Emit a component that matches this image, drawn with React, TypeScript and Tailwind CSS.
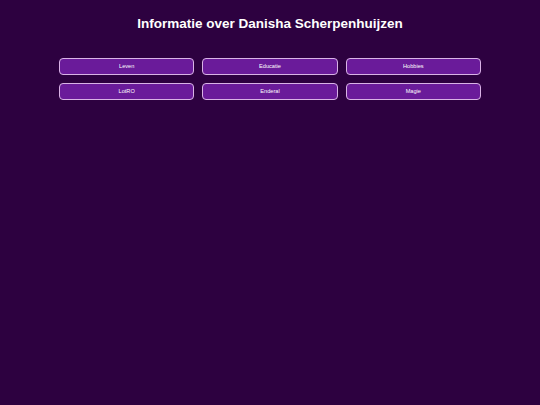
import React from "react";

const items = ["Leven", "Educatie", "Hobbies", "LotRO", "Enderal", "Magie"];

export default function App() {
  return (
    <div
      className="min-h-[405px] w-full bg-[#2d0140] text-white"
      style={{ fontFamily: '"Liberation Sans", Arial, sans-serif' }}
    >
      <h1 className="pt-[15px] text-center text-[13.5px] font-bold leading-[18px]">
        Informatie over Danisha Scherpenhuijzen
      </h1>
      <div className="mx-auto mt-[25px] grid w-[422px] grid-cols-3 gap-x-[8px] gap-y-[8px]">
        {items.map((t) => (
          <button
            key={t}
            className="flex h-[17px] items-center justify-center rounded-[4px] border border-[#d9b3e6] bg-[#6a1b9a] text-[5.6px] text-white"
          >
            {t}
          </button>
        ))}
      </div>
    </div>
  );
}
